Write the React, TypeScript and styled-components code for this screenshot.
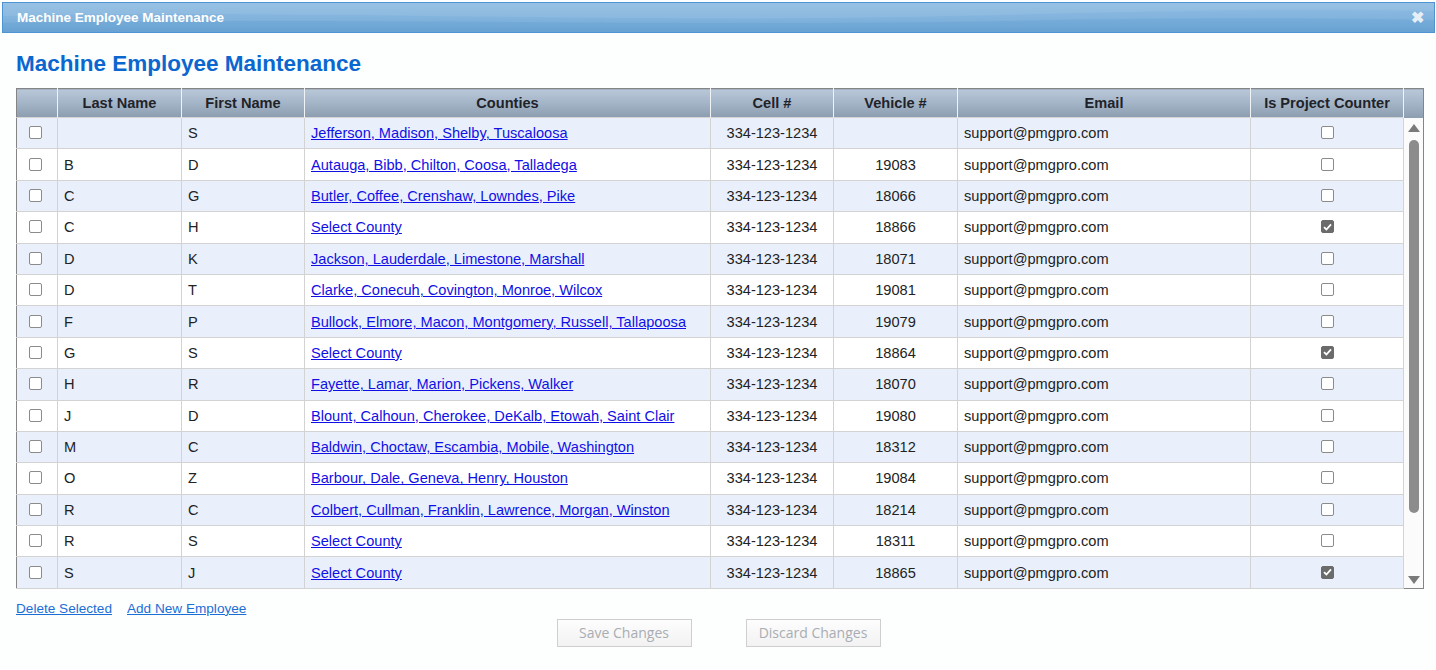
import React from "react";
import styled, { createGlobalStyle } from "styled-components";

const GlobalStyle = createGlobalStyle`
  html, body { margin: 0; padding: 0; background: #ffffff; }
  body { font-family: "Liberation Sans", Arial, sans-serif; }
`;

const Dialog = styled.div`
  width: 1436px;
  height: 670px;
  box-sizing: border-box;
  padding: 2px 1px 0 2px;
  background: #fdfefe;
`;

const TitleBar = styled.div`
  position: relative;
  height: 31px;
  box-sizing: border-box;
  border: 1px solid #4e94d2;
  background: linear-gradient(180deg, #8fbce2 0%, #84b5de 45%, #6fa7d5 100%);
  display: flex;
  align-items: center;
  justify-content: space-between;
  padding: 0 10px 0 14px;
  overflow: hidden;
`;

const Wave = styled.svg`
  position: absolute;
  left: 0;
  top: 0;
  width: 100%;
  height: 100%;
  pointer-events: none;
`;

const TitleText = styled.span`
  position: relative;
  color: #ffffff;
  font-weight: bold;
  font-size: 13.5px;
`;

const CloseX = styled.span`
  position: relative;
  color: #e6eef6;
  font-weight: bold;
  font-size: 16px;
  line-height: 1;
`;

const Body = styled.div`
  padding: 0 12px 0 14px;
`;

const Heading = styled.h1`
  margin: 18px 0 11px 0;
  font-size: 22.5px;
  line-height: 26px;
  font-weight: bold;
  color: #0b67d0;
`;

const Grid = styled.table`
  border-collapse: collapse;
  table-layout: fixed;
  width: 1408px;
  border: 1px solid #858585;
  font-size: 14.6px;
  color: #222;
`;

const HeadCell = styled.th`
  height: 28px;
  padding: 0;
  font-size: 14.6px;
  font-weight: bold;
  color: #1f2329;
  text-align: center;
  background: linear-gradient(180deg, #b9c8d8 0%, #a3b4c7 50%, #8d9db0 100%);
  border-left: 1px solid #f0f3f6;
  &:first-child { border-left: none; }
`;

const Row = styled.tr<{ $alt: boolean }>`
  height: 31.4px;
  background: ${(p) => (p.$alt ? "#e9f0fc" : "#ffffff")};
`;

const Cell = styled.td<{ $align?: "left" | "center" }>`
  padding: 0 6px;
  border: 1px solid #d3d3d3;
  text-align: ${(p) => p.$align ?? "left"};
  white-space: nowrap;
  overflow: hidden;
  &:first-child { border-left: none; }
`;

const BoxCell = styled.td`
  padding: 0;
  border: 1px solid #d3d3d3;
  &:first-child { border-left: none; }
`;

const BoxWrap = styled.div<{ $shift: number }>`
  display: flex;
  align-items: center;
  justify-content: center;
  height: 100%;
  margin-left: ${(p) => p.$shift}px;
  margin-top: -1px;
`;

const ScrollCell = styled.td`
  padding: 0;
  background: #fbfbfb;
  border-left: 1px solid #d3d3d3;
  vertical-align: top;
`;

const ScrollTrack = styled.div`
  height: 470px;
  display: flex;
  flex-direction: column;
  align-items: center;
  padding: 6px 0 4px;
  box-sizing: border-box;
`;

const Thumb = styled.div`
  width: 10px;
  flex: 0 0 373px;
  margin: 8px 0 0;
  border-radius: 5px;
  background: #8c8c8c;
`;

const Spacer = styled.div`
  flex: 1;
`;

const Box = styled.span<{ $checked?: boolean }>`
  display: inline-flex;
  align-items: center;
  justify-content: center;
  width: 13px;
  height: 13px;
  box-sizing: border-box;
  border-radius: 2px;
  border: 1px solid ${(p) => (p.$checked ? "#6b6b6b" : "#8b8b8b")};
  background: ${(p) => (p.$checked ? "#6b6b6b" : "#ffffff")};
`;

const CountyLink = styled.a`
  color: #1010e6;
  text-decoration: underline;
  cursor: pointer;
`;

const LinkBar = styled.div`
  display: flex;
  gap: 15px;
  margin-top: 12px;
  font-size: 13.6px;
  line-height: 15px;
`;

const ActionLink = styled.a`
  color: #1b6ed6;
  text-decoration: underline;
  cursor: pointer;
`;

const ButtonBar = styled.div`
  display: flex;
  justify-content: center;
  gap: 54px;
  margin-top: 3px;
  padding-right: 2px;
`;

const Button = styled.button`
  width: 135px;
  height: 28px;
  border: 1px solid #cfcfcf;
  background: linear-gradient(180deg, #fdfdfd 0%, #f2f2f2 100%);
  color: #a9adb3;
  font-family: "Open Sans", "DejaVu Sans", sans-serif;
  font-size: 14px;
  padding: 0;
`;

type Employee = {
  last: string;
  first: string;
  counties: string;
  vehicle: string;
  counter: boolean;
};

const employees: Employee[] = [
  { last: "", first: "S", counties: "Jefferson, Madison, Shelby, Tuscaloosa", vehicle: "", counter: false },
  { last: "B", first: "D", counties: "Autauga, Bibb, Chilton, Coosa, Talladega", vehicle: "19083", counter: false },
  { last: "C", first: "G", counties: "Butler, Coffee, Crenshaw, Lowndes, Pike", vehicle: "18066", counter: false },
  { last: "C", first: "H", counties: "Select County", vehicle: "18866", counter: true },
  { last: "D", first: "K", counties: "Jackson, Lauderdale, Limestone, Marshall", vehicle: "18071", counter: false },
  { last: "D", first: "T", counties: "Clarke, Conecuh, Covington, Monroe, Wilcox", vehicle: "19081", counter: false },
  { last: "F", first: "P", counties: "Bullock, Elmore, Macon, Montgomery, Russell, Tallapoosa", vehicle: "19079", counter: false },
  { last: "G", first: "S", counties: "Select County", vehicle: "18864", counter: true },
  { last: "H", first: "R", counties: "Fayette, Lamar, Marion, Pickens, Walker", vehicle: "18070", counter: false },
  { last: "J", first: "D", counties: "Blount, Calhoun, Cherokee, DeKalb, Etowah, Saint Clair", vehicle: "19080", counter: false },
  { last: "M", first: "C", counties: "Baldwin, Choctaw, Escambia, Mobile, Washington", vehicle: "18312", counter: false },
  { last: "O", first: "Z", counties: "Barbour, Dale, Geneva, Henry, Houston", vehicle: "19084", counter: false },
  { last: "R", first: "C", counties: "Colbert, Cullman, Franklin, Lawrence, Morgan, Winston", vehicle: "18214", counter: false },
  { last: "R", first: "S", counties: "Select County", vehicle: "18311", counter: false },
  { last: "S", first: "J", counties: "Select County", vehicle: "18865", counter: true },
];

const widths = [41, 124, 123, 406, 123, 124, 293, 153, 20];
const headers = ["", "Last Name", "First Name", "Counties", "Cell #", "Vehicle #", "Email", "Is Project Counter", ""];

function CheckBox({ checked }: { checked?: boolean }) {
  return (
    <Box $checked={checked}>
      {checked && (
        <svg width="9" height="8" viewBox="0 0 9 8">
          <path d="M1 4.2 L3.4 6.5 L8 1.3" fill="none" stroke="#fff" strokeWidth="1.8" />
        </svg>
      )}
    </Box>
  );
}

function Arrow({ up }: { up?: boolean }) {
  return (
    <svg width="12" height="8" viewBox="0 0 12 8">
      <path d={up ? "M6 0 L12 8 L0 8 Z" : "M0 0 L12 0 L6 8 Z"} fill="#7a7a7a" />
    </svg>
  );
}

export default function App() {
  return (
    <>
      <GlobalStyle />
      <Dialog>
        <TitleBar>
          <Wave viewBox="0 0 1432 29" preserveAspectRatio="none">
            <path
              d="M0 13 C300 6 600 20 900 14 C1100 10 1250 4 1432 8 L1432 0 L0 0 Z"
              fill="#ffffff"
              opacity="0.08"
            />
            <path
              d="M0 20 C350 14 700 24 1000 18 C1200 14 1300 15 1432 17 L1432 29 L0 29 Z"
              fill="#3d84c4"
              opacity="0.12"
            />
          </Wave>
          <TitleText>Machine Employee Maintenance</TitleText>
          <CloseX>✖</CloseX>
        </TitleBar>
        <Body>
          <Heading>Machine Employee Maintenance</Heading>
          <Grid>
            <colgroup>
              {widths.map((w, i) => (
                <col key={i} style={{ width: w }} />
              ))}
            </colgroup>
            <thead>
              <tr>
                {headers.map((h, i) => (
                  <HeadCell key={i}>{h}</HeadCell>
                ))}
              </tr>
            </thead>
            <tbody>
              {employees.map((e, i) => (
                <Row key={i} $alt={i % 2 === 0}>
                  <BoxCell>
                    <BoxWrap $shift={-3}>
                      <CheckBox />
                    </BoxWrap>
                  </BoxCell>
                  <Cell>{e.last}</Cell>
                  <Cell>{e.first}</Cell>
                  <Cell>
                    <CountyLink>{e.counties}</CountyLink>
                  </Cell>
                  <Cell $align="center">334-123-1234</Cell>
                  <Cell $align="center">{e.vehicle}</Cell>
                  <Cell>support@pmgpro.com</Cell>
                  <BoxCell>
                    <BoxWrap $shift={0}>
                      <CheckBox checked={e.counter} />
                    </BoxWrap>
                  </BoxCell>
                  {i === 0 && (
                    <ScrollCell rowSpan={employees.length}>
                      <ScrollTrack>
                        <Arrow up />
                        <Thumb />
                        <Spacer />
                        <Arrow />
                      </ScrollTrack>
                    </ScrollCell>
                  )}
                </Row>
              ))}
            </tbody>
          </Grid>
          <LinkBar>
            <ActionLink>Delete Selected</ActionLink>
            <ActionLink>Add New Employee</ActionLink>
          </LinkBar>
          <ButtonBar>
            <Button disabled>Save Changes</Button>
            <Button disabled>Discard Changes</Button>
          </ButtonBar>
        </Body>
      </Dialog>
    </>
  );
}
